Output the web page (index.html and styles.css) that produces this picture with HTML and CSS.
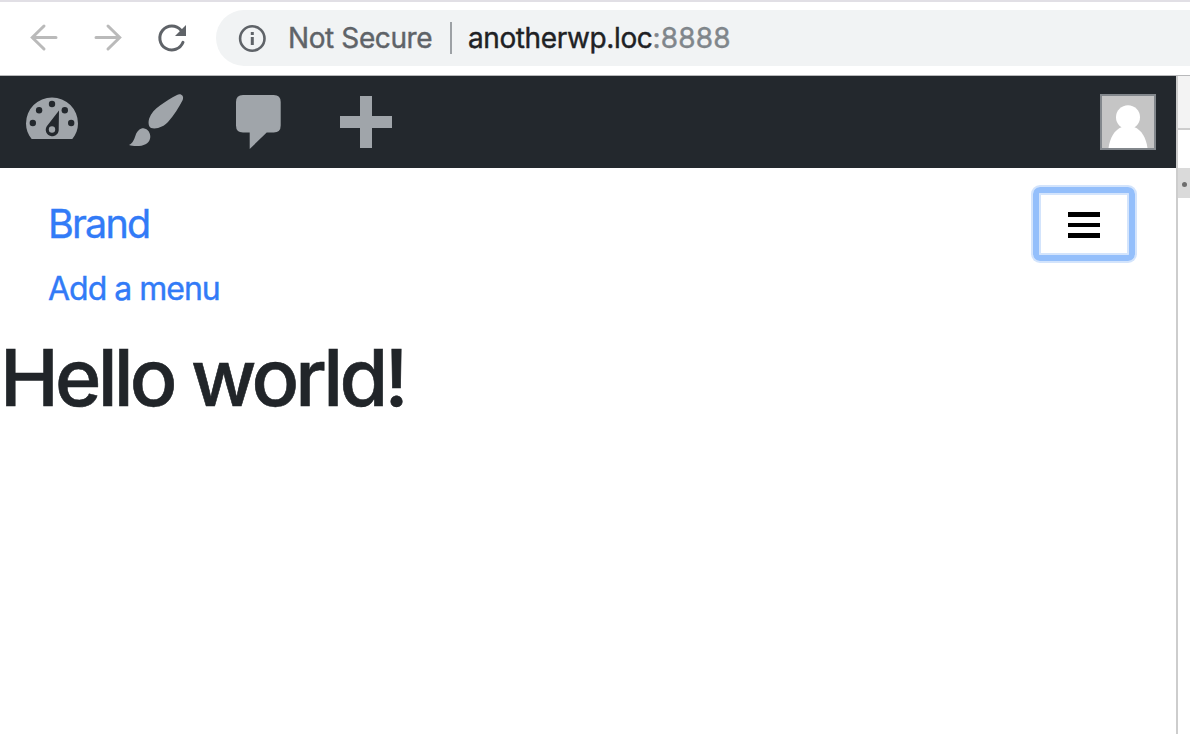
FILE: index.html
```
<!DOCTYPE html>
<html lang="en">
<head>
	<meta charset="utf-8">
	<title>Hello world!</title>
	<link rel="stylesheet" href="styles.css">
</head>
<body>

<div class="toolbar">
	<svg class="nav-icons" width="216" height="73" viewBox="0 2 216 73">
		<g class="nav-off">
			<path d="M56 37.5H33M44 26L32.3 37.5L44 49"/>
			<path d="M96 37.5H119M108 26L119.700 37.5L108 49"/>
		</g>
		<path class="nav-on" d="M181 30.200A12 12 0 1 0 183 42.300"/>
		<path class="nav-tip" d="M186 25V36H175Z"/>
	</svg>
	<div class="address">
		<svg class="info" width="28" height="28" viewBox="0 0 28 28">
			<circle cx="14.300" cy="14.500" r="12.2"/>
			<path d="M12.800 8h3v3h-3zM12.800 13h3v8h-3z"/>
		</svg>
		<span class="secure">Not Secure</span>
		<span class="divider"></span>
		<span class="host">anotherwp.loc</span><span class="port">:8888</span>
	</div>
</div>

<div class="window">
	<div class="page">
		<div class="adminbar">
			<svg width="104" height="92" viewBox="0 0 104 92">
				<path fill-rule="evenodd" d="M31.700 63C28 58.500 26 53.500 26 47.500A26 26 0 0 1 78 47.500C78 53.500 76 58.500 72.300 63ZM59 34.500L46.800 50.200A6.500 6.500 0 1 0 58.700 53Z"/>
				<circle cx="52" cy="53.500" r="3.200"/>
				<g class="holes">
					<circle cx="32.800" cy="47" r="3.200"/>
					<circle cx="39.100" cy="34.300" r="3.200"/>
					<circle cx="52" cy="28" r="3.200"/>
					<circle cx="64.800" cy="34.300" r="3.200"/>
					<circle cx="71.200" cy="47" r="3.200"/>
				</g>
			</svg>
			<svg width="104" height="92" viewBox="104 0 104 92">
				<path d="M177 19C180.500 17 184.500 19.500 182.700 24C179 31.500 174 39 168 46C164 50.500 157 53.500 151 52C148.500 50.500 148 46.500 149.200 42.500C151 37 155 33 160 29.500C166 25 171 22 177 19Z"/>
				<path d="M129 69C133 67 134 63.500 135.500 59.500C137 55 140 52.300 143.500 52.300C148 53 150.500 57 150.300 61C150 66 146 69.500 139 70C135 70.300 132 70 129 69Z"/>
			</svg>
			<svg width="104" height="92" viewBox="208 0 104 92">
				<path d="M243 19H273.700Q280.700 19 280.700 26V49.500Q280.700 56.500 273.700 56.500H266.700L249.700 73V56.500H243Q236 56.500 236 49.500V26Q236 19 243 19Z"/>
			</svg>
			<svg width="104" height="92" viewBox="312 0 104 92">
				<path d="M360 20h12v20h20v12h-20v20h-12V52h-20V40h20z"/>
			</svg>
			<svg class="avatar" width="52" height="52" viewBox="0 0 52 52">
				<circle cx="26" cy="21.300" r="12"/>
				<path d="M6.500 52C8 42 12 34 20 31H32C40 34 44 42 45.500 52Z"/>
			</svg>
		</div>

		<div class="navbar">
			<a class="brand">Brand</a>
			<div class="toggler">
				<span></span>
				<span></span>
				<span></span>
			</div>
			<a class="menu">Add a menu</a>
		</div>

		<h1>Hello world!</h1>
	</div>

	<div class="devtools">
		<div class="tabs"></div>
		<div class="ruler"></div>
		<div class="handle"><span></span></div>
	</div>
</div>

</body>
</html>
```
FILE: styles.css
```
body {
	margin: 0;
	height: 734px;
	overflow: hidden;
	background: #fff;
	font-family: Inter, "Liberation Sans", sans-serif;
	color: #212529;
}

svg {
	display: block;
	flex: none;
}

.toolbar {
	display: flex;
	box-sizing: border-box;
	height: 76px;
	border-top: 2px solid #e1dfe5;
	border-bottom: 1px solid #b8b9bb;
}

.nav-off,
.nav-on {
	fill: none;
	stroke-width: 3;
	stroke-linecap: round;
}

.nav-off {
	stroke: #bababa;
}

.nav-on {
	stroke: #5f6368;
}

.nav-tip {
	fill: #5f6368;
}

.address {
	display: flex;
	align-items: center;
	flex: 1;
	height: 56px;
	margin-top: 8px;
	padding-left: 22px;
	border-radius: 28px 0 0 28px;
	background: #f1f3f4;
	font-size: 28px;
	letter-spacing: -0.4px;
	-webkit-text-stroke: 0.4px;
	white-space: nowrap;
}

.info {
	fill: #5f6368;
}

.info circle {
	fill: none;
	stroke: #5f6368;
	stroke-width: 2.6;
}

.secure {
	width: 162px;
	margin-left: 22px;
	color: #5f6368;
}

.divider {
	width: 2px;
	height: 32px;
	margin-right: 16px;
	background: #9da1a5;
}

.host {
	color: #202124;
}

.port {
	color: #80868b;
	letter-spacing: 0.2px;
}

.window {
	display: flex;
	height: 658px;
}

.page {
	width: 1176px;
}

.adminbar {
	display: flex;
	height: 92px;
	background: #23282d;
	fill: #a0a5aa;
}

.holes {
	fill: #23282d;
}

.adminbar .avatar {
	margin: 18px 20px 0 auto;
	border: 2px solid #82878c;
	background: #c5c5c5;
	fill: #fff;
}

.navbar {
	display: grid;
	grid-template-columns: 1fr 106px;
	grid-template-rows: 78px 48px;
	padding: 17px 39px 0 48px;
	color: #327bf7;
	-webkit-text-stroke: 0.4px;
}

.brand {
	font-size: 39.5px;
	letter-spacing: -1.8px;
	line-height: 79px;
}

.menu {
	font-size: 32px;
	letter-spacing: -1px;
	line-height: 52px;
}

.toggler {
	display: flex;
	flex-direction: column;
	align-items: center;
	justify-content: center;
	gap: 6px;
	box-sizing: border-box;
	height: 74px;
	margin: 2px;
	padding-top: 2px;
	border: 6px solid #94bffb;
	border-radius: 7px;
	box-shadow: 0 0 0 2px #d3e4fc, inset 0 0 0 2px #d3e4fc;
}

.toggler span {
	width: 32px;
	height: 4.700px;
	background: #000;
}

h1 {
	margin: 18px 0 0;
	font-size: 79px;
	font-weight: 500;
	letter-spacing: -3.800px;
	line-height: 96px;
	white-space: nowrap;
	-webkit-text-stroke: 0.6px;
}

.devtools {
	flex: 1;
	border-left: 2px solid #cdcdcd;
}

.tabs {
	height: 52px;
	border-bottom: 2px solid #cdcdcd;
	background: #f3f3f3;
}

.ruler {
	height: 38px;
}

.handle {
	display: flex;
	align-items: center;
	height: 30px;
	padding: 3px 0 0 4px;
	box-sizing: border-box;
	background: #dadada;
}

.handle span {
	width: 5px;
	height: 5px;
	border-radius: 50%;
	background: #6e6e6e;
}
```
